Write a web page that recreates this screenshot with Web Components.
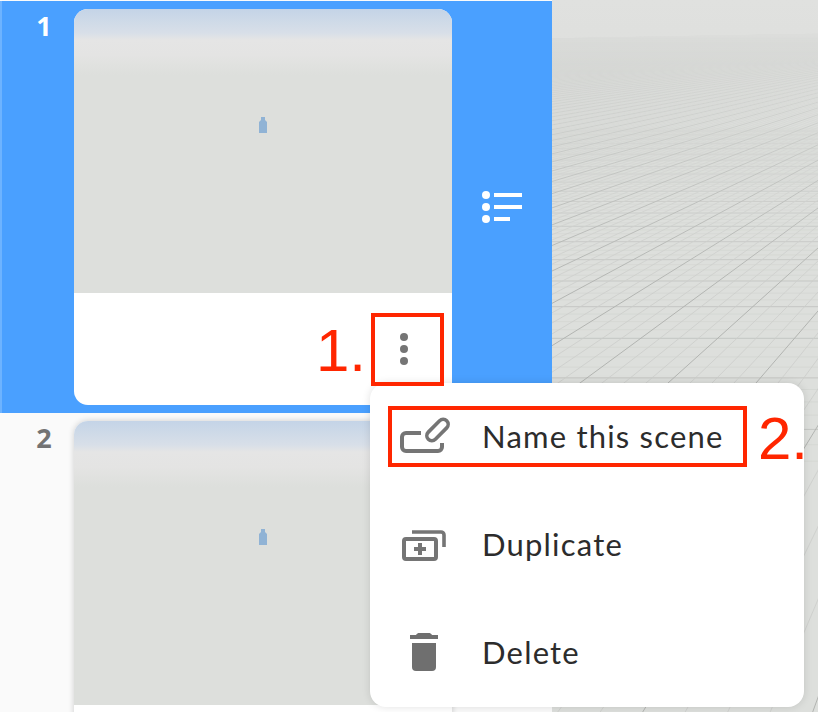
<!DOCTYPE html>
<html>
<head>
<meta charset="utf-8">
<title>Scenes</title>
<style>
  html, body { margin: 0; padding: 0; height: 712px; overflow: hidden; background: #fff; }
</style>
</head>
<body>
<app-shell>
  <scene-list slot="sidebar">
    <scene-row number="1" selected>
      <scene-card></scene-card>
      <svg slot="action" width="40" height="32" viewBox="0 0 40 32" fill="#fff">
        <circle cx="4" cy="4" r="4"/><circle cx="4" cy="16" r="4"/><circle cx="4" cy="28" r="4"/>
        <rect x="12" y="2" width="28" height="4"/><rect x="12" y="14" width="28" height="4"/><rect x="12" y="26" width="16" height="4"/>
      </svg>
    </scene-row>
    <scene-row number="2"><scene-card></scene-card></scene-row>
  </scene-list>
  <grid-viewport slot="viewport"></grid-viewport>
  <scene-menu slot="overlay">
    <menu-item label="Name this scene">
      <svg slot="icon" width="52" height="40" viewBox="0 0 52 40" fill="none" stroke="#757575" stroke-width="4">
        <path d="M23 16H8a4 4 0 0 0-4 4v10a4 4 0 0 0 4 4h32a4 4 0 0 0 4-4v-4"/>
        <rect x="26.500" y="8" width="26" height="10" rx="5" transform="rotate(-45 39.500 13)" stroke-width="3.600"/>
      </svg>
    </menu-item>
    <menu-item label="Duplicate">
      <svg slot="icon" width="52" height="40" viewBox="0 0 52 40" fill="none" stroke="#757575" stroke-width="4">
        <rect x="6" y="14" width="32" height="20" rx="2"/>
        <path d="M14 7h29a3 3 0 0 1 3 3v12" stroke-width="3.600"/>
        <path d="M16 24h12M22 18v12"/>
      </svg>
    </menu-item>
    <menu-item label="Delete">
      <svg slot="icon" width="52" height="40" viewBox="0 0 52 40" fill="#6f6f6f">
        <path d="M12 2h6c1-1.400 2-2 3-2h10c1 0 2 .6 3 2h6v4H12z"/>
        <path d="M14 10h24v24a4 4 0 0 1-4 4H18a4 4 0 0 1-4-4z"/>
      </svg>
    </menu-item>
  </scene-menu>
  <red-mark slot="overlay" style="left:371px;top:313px;width:73px;height:73px"></red-mark>
  <red-mark slot="overlay" style="left:388px;top:406px;width:359px;height:61px"></red-mark>
  <red-label slot="overlay" style="left:316px;top:316px">1.</red-label>
  <red-label slot="overlay" style="left:758px;top:404px">2.</red-label>
</app-shell>

<script>
  // общий хелпер: создаёт open shadow root с разметкой
  function shadow(el, html) {
    el.attachShadow({ mode: 'open' });
    el.shadowRoot.innerHTML = html;
  }

  class AppShell extends HTMLElement {
    constructor() {
      super();
      shadow(this, `
        <style>
          :host { display: block; position: relative; width: 818px; height: 712px; overflow: hidden; }
          .main { display: flex; height: 100%; }
          .side { flex: 0 0 552px; }
          .view { flex: 1; min-width: 0; }
        </style>
        <div class="main">
          <div class="side"><slot name="sidebar"></slot></div>
          <div class="view"><slot name="viewport"></slot></div>
        </div>
        <slot name="overlay"></slot>
      `);
    }
  }

  class SceneList extends HTMLElement {
    constructor() {
      super();
      shadow(this, `
        <style>
          :host { display: flex; flex-direction: column; height: 100%; background: #fafafa; padding-top: 1px; box-sizing: border-box; }
        </style>
        <slot></slot>
      `);
    }
  }

  class SceneRow extends HTMLElement {
    constructor() {
      super();
      shadow(this, `
        <style>
          :host { display: grid; grid-template-columns: 74px 378px 100px; padding: 8px 0; flex: none; color: #737373; --card-shadow: 0 0 6px rgba(0,0,0,.18); }
          :host([selected]) { background: #4aa0ff; color: #fff; box-shadow: inset 2px 0 0 #6db3ff; --card-shadow: none; }
          .num { font: 700 27px/33px "Open Sans", sans-serif; text-align: center; padding-left: 14px; box-sizing: border-box; }
          .action { display: flex; align-items: center; justify-content: center; }
        </style>
        <div class="num"></div>
        <slot></slot>
        <div class="action"><slot name="action"></slot></div>
      `);
      this.shadowRoot.querySelector('.num').textContent = this.getAttribute('number');
    }
  }

  class SceneCard extends HTMLElement {
    constructor() {
      super();
      shadow(this, `
        <style>
          :host { display: block; height: 396px; background: #fff; border-radius: 14px; overflow: hidden; box-shadow: var(--card-shadow); }
          .thumb {
            height: 284px; display: flex; justify-content: center; padding-top: 108px; box-sizing: border-box;
            background: linear-gradient(#c4d4e7 0, #d8dfe8 24px, #e5e5e5 31px, #e4e4e3 46px, #dddfdc 66px);
          }
          .foot { height: 112px; display: flex; justify-content: flex-end; align-items: flex-start; padding: 40px 44px 0 0; box-sizing: border-box; }
          i { display: block; width: 8px; height: 8px; border-radius: 50%; background: #757575; margin-bottom: 4px; }
        </style>
        <div class="thumb">
          <svg width="10" height="16" viewBox="0 0 10 16"><path d="M3 0h4v3l2 2v11H1V5l2-2z" fill="#90b3d5"/></svg>
        </div>
        <div class="foot"><div><i></i><i></i><i></i></div></div>
      `);
    }
  }

  class GridViewport extends HTMLElement {
    constructor() {
      super();
      // перспективная сетка: горизонтали + линии в точку схода
      const W = 266, H = 712, vx = 508, vy = 30;
      let hMinor = '', hMajor = '', dMinor = '', dMajor = '';
      for (let n = -6; n < 80; n++) {
        const inv = 0.002874 + n * 0.0000925;
        if (inv <= 0) continue;
        const y = vy + 1 / inv;
        if (y > H) continue;
        const d = `M0 ${y.toFixed(1)}H${W}`;
        if (n % 4 === 0) hMajor += d; else hMinor += d;
      }
      for (let k = -900; k < 40; k++) {
        const x0 = 28 + k * 22;
        const d = `M${vx} ${vy}L${(vx + (x0 - vx) * (H - vy) / 353).toFixed(1)} ${H}`;
        if (((k % 4) + 4) % 4 === 0) dMajor += d; else dMinor += d;
      }
      const fade = 'linear-gradient(transparent 30px, rgba(0,0,0,.1) 40px, rgba(0,0,0,.35) 120px, rgba(0,0,0,.7) 200px, #000 300px)';
      shadow(this, `
        <style>
          :host { display: block; height: 100%; background: linear-gradient(#e0e1df 0, #dfe0de 30px, #dddfdc 120px); }
          svg { display: block; -webkit-mask-image: ${fade}; mask-image: ${fade}; }
        </style>
        <svg width="${W}" height="${H}" fill="none">
          <path d="${hMinor}" stroke="#d3d5d2" stroke-width=".8"/>
          <path d="${hMajor}" stroke="#c4c6c3" stroke-width="1"/>
          <path d="${dMinor}" stroke="#cbcdca" stroke-width=".8"/>
          <path d="${dMajor}" stroke="#b2b4b1" stroke-width="1"/>
        </svg>
      `);
    }
  }

  class SceneMenu extends HTMLElement {
    constructor() {
      super();
      shadow(this, `
        <style>
          :host { display: flex; flex-direction: column; position: absolute; left: 370px; top: 383px; width: 434px; height: 324px; background: #fff; border-radius: 16px; box-shadow: 0 0 8px rgba(0,0,0,.12); }
        </style>
        <slot></slot>
      `);
    }
  }

  class MenuItem extends HTMLElement {
    constructor() {
      super();
      shadow(this, `
        <style>
          :host { display: flex; align-items: center; flex: 1; padding-left: 28px; gap: 32px; font: 31px Lato, sans-serif; letter-spacing: 1.2px; color: #2c2c2c; }
          ::slotted(svg) { display: block; overflow: visible; }
          .icon { width: 52px; height: 40px; flex: none; }
          .label { position: relative; top: -1px; }
        </style>
        <div class="icon"><slot name="icon"></slot></div>
        <span class="label"></span>
      `);
      this.shadowRoot.querySelector('.label').textContent = this.getAttribute('label');
    }
  }

  class RedMark extends HTMLElement {
    constructor() {
      super();
      shadow(this, `<style>:host { display: block; position: absolute; box-sizing: border-box; border: 4px solid #ff2600; }</style>`);
    }
  }

  class RedLabel extends HTMLElement {
    constructor() {
      super();
      shadow(this, `
        <style>:host { display: block; position: absolute; font: 60px/69px "Liberation Sans", Arial, sans-serif; color: #ff2600; }</style>
        <slot></slot>
      `);
    }
  }

  customElements.define('app-shell', AppShell);
  customElements.define('scene-list', SceneList);
  customElements.define('scene-row', SceneRow);
  customElements.define('scene-card', SceneCard);
  customElements.define('grid-viewport', GridViewport);
  customElements.define('scene-menu', SceneMenu);
  customElements.define('menu-item', MenuItem);
  customElements.define('red-mark', RedMark);
  customElements.define('red-label', RedLabel);
</script>
</body>
</html>
